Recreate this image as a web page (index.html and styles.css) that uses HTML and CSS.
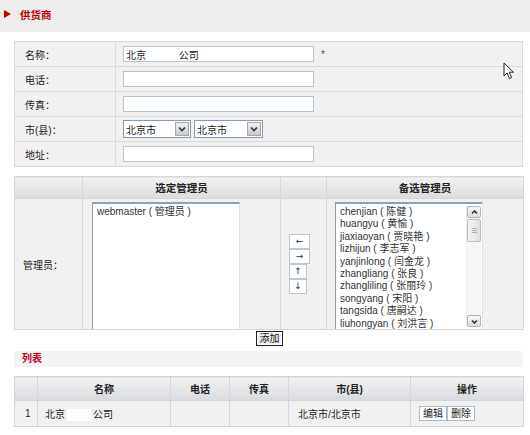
FILE: index.html
```html
<!DOCTYPE html>
<html>
<head>
<meta charset="utf-8">
<link rel="stylesheet" href="styles.css">
</head>
<body>
<div class="titlebar"><span class="tri"></span><span class="title">供货商</span></div>

<table class="form">
  <colgroup><col class="c-label"><col></colgroup>
  <tr><th>名称：</th><td><input class="txt" value="北京　　　 公司"><span class="req">*</span></td></tr>
  <tr><th>电话：</th><td><input class="txt" value=""></td></tr>
  <tr><th>传真：</th><td><input class="txt" value=""></td></tr>
  <tr><th>市(县)：</th><td>
    <div class="selects">
      <div class="sel"><span class="sel-text">北京市</span><span class="sel-btn"><svg width="12" height="12" viewBox="0 0 12 12"><path d="M3 4.5 L6 7.5 L9 4.5" fill="none" stroke="#333" stroke-width="1.6"/></svg></span></div>
      <div class="sel"><span class="sel-text">北京市</span><span class="sel-btn"><svg width="12" height="12" viewBox="0 0 12 12"><path d="M3 4.5 L6 7.5 L9 4.5" fill="none" stroke="#333" stroke-width="1.6"/></svg></span></div>
    </div>
  </td></tr>
  <tr><th>地址：</th><td><input class="txt" value=""></td></tr>
</table>

<table class="admin">
  <colgroup><col class="a1"><col class="a2"><col class="a3"><col class="a4"></colgroup>
  <tr class="head"><th></th><th>选定管理员</th><th></th><th>备选管理员</th></tr>
  <tr class="body">
    <td class="lbl">管理员：</td>
    <td class="top">
      <div class="listbox left">
        <div class="item">webmaster ( 管理员 )</div>
      </div>
    </td>
    <td class="mid">
      <div class="arrows">
        <span class="abtn wide">←</span>
        <span class="abtn wide">→</span>
        <span class="abtn">↑</span>
        <span class="abtn">↓</span>
      </div>
    </td>
    <td class="top">
      <div class="listbox right">
        <div class="items">
          <div class="item">chenjian ( 陈健 )</div>
          <div class="item">huangyu ( 黄愉 )</div>
          <div class="item">jiaxiaoyan ( 贾晓艳 )</div>
          <div class="item">lizhijun ( 李志军 )</div>
          <div class="item">yanjinlong ( 闫金龙 )</div>
          <div class="item">zhangliang ( 张良 )</div>
          <div class="item">zhangliling ( 张丽玲 )</div>
          <div class="item">songyang ( 宋阳 )</div>
          <div class="item">tangsida ( 唐嗣达 )</div>
          <div class="item">liuhongyan ( 刘洪言 )</div>
        </div>
        <div class="scrollbar">
          <span class="sb-btn"><svg width="11" height="11" viewBox="0 0 11 11"><path d="M3 6.5 L5.5 4 L8 6.5" fill="none" stroke="#333" stroke-width="1.6"/></svg></span>
          <span class="sb-thumb"><i></i><i></i><i></i></span>
          <span class="sb-track"></span>
          <span class="sb-btn"><svg width="11" height="11" viewBox="0 0 11 11"><path d="M3 4.5 L5.5 7 L8 4.5" fill="none" stroke="#333" stroke-width="1.6"/></svg></span>
        </div>
      </div>
    </td>
  </tr>
</table>

<div class="addrow"><button class="btn-add">添加</button></div>

<div class="listbar">列表</div>

<table class="list">
  <colgroup><col class="l1"><col class="l2"><col class="l3"><col class="l4"><col class="l5"><col class="l6"></colgroup>
  <tr class="head"><th></th><th>名称</th><th>电话</th><th>传真</th><th>市(县)</th><th>操作</th></tr>
  <tr class="row">
    <td class="num">1</td>
    <td class="name">北京<span class="redact"></span>公司</td>
    <td></td>
    <td></td>
    <td class="city">北京市/北京市</td>
    <td class="ops"><span class="opbtn">编辑</span><span class="opbtn">删除</span></td>
  </tr>
</table>

<svg class="cursor" width="13" height="18" viewBox="0 0 13 18"><path d="M1 1 L1 14 L4 11 L6.5 16.5 L8.6 15.6 L6.2 10.2 L10.4 10.2 Z" fill="#fff" stroke="#222" stroke-width="1" stroke-linejoin="round"/></svg>
</body>
</html>
```

FILE: styles.css
```css
html, body {
  margin: 0;
  padding: 0;
}
body {
  width: 530px;
  height: 435px;
  position: relative;
  overflow: hidden;
  background: #fff;
  color: #333;
  font-family: "Liberation Sans", "Noto Sans CJK SC", sans-serif;
  font-size: 10px;
}

/* title bar */
.titlebar {
  height: 28px;
  padding: 0 0 4px 4px;
  background: #eeeeee;
  display: flex;
  align-items: center;
}
.tri {
  width: 0;
  height: 0;
  border-left: 7px solid #d40000;
  border-top: 4px solid transparent;
  border-bottom: 4px solid transparent;
  margin-right: 9px;
}
.title {
  color: #c00000;
  font-weight: bold;
  font-size: 10.5px;
}

/* form table */
.form, .admin, .list {
  border-collapse: collapse;
  width: 509px;
  margin-left: 14px;
  background: #f1f1f1;
  table-layout: fixed;
}
.form {
  margin-top: 9px;
}
.c-label { width: 101px; }
.form th, .form td {
  border: 1px solid #dadada;
  height: 24px;
  padding: 0;
  font-weight: normal;
  text-align: left;
  color: #222;
}
.form th {
  padding-left: 10px;
}
.form td {
  padding-left: 7px;
}
.txt {
  width: 191px;
  height: 16px;
  box-sizing: border-box;
  border: 1px solid #b3c3d3;
  background: #fff;
  padding: 0 2px;
  margin: 0;
  font-family: inherit;
  font-size: 10px;
  color: #222;
  vertical-align: middle;
}
.req {
  margin-left: 7px;
  color: #555;
  font-size: 10px;
  vertical-align: middle;
}
.selects {
  display: flex;
  gap: 3px;
}
.sel {
  width: 68px;
  height: 18px;
  box-sizing: border-box;
  border: 1px solid #7f9db9;
  background: #fff;
  display: flex;
  align-items: center;
}
.sel + .sel { width: 69px; }
.sel-text {
  padding-left: 2px;
  color: #222;
}
.sel-btn {
  margin-left: auto;
  margin-right: 1px;
  width: 14px;
  height: 14px;
  box-sizing: border-box;
  border: 1px solid #a7a7a7;
  background: linear-gradient(#f0f0f0, #c9c9c9);
  display: flex;
  align-items: center;
  justify-content: center;
}

/* admin table */
.admin {
  margin-top: 9px;
}
.a1 { width: 68px; }
.a2 { width: 198px; }
.a3 { width: 46px; }
.a4 { width: 197px; }
.admin th, .admin td, .list th, .list td {
  border: 1px solid #d6d6d6;
  padding: 0;
}
.admin .head th {
  height: 21px;
  background: linear-gradient(#f2f2f2, #dcdcdc);
  font-weight: bold;
  font-size: 10.5px;
  color: #222;
}
.admin .body td {
  height: 130px;
}
.admin .lbl {
  vertical-align: middle;
  padding-left: 8px;
  color: #222;
}
.admin .top {
  vertical-align: bottom;
}
.admin .mid {
  vertical-align: middle;
}
.listbox {
  width: 148px;
  height: 127px;
  box-sizing: border-box;
  background: #fff;
  border-top: 2px solid #86a3ba;
  border-left: 1px solid #9a9a9a;
  border-right: 1px solid #e2e2e2;
  margin-left: 9px;
  line-height: 12.4px;
  color: #333;
}
.listbox.left {
  padding: 2px 4px;
}
.listbox.right {
  margin-left: 8px;
  display: flex;
}
.items {
  flex: 1;
  padding: 2px 0 0 4px;
  white-space: nowrap;
  overflow: hidden;
}
.scrollbar {
  width: 14px;
  margin: 2px 1px 2px 0;
  display: flex;
  flex-direction: column;
  background: #f6f6f6;
  border-left: 1px solid #eee;
}
.sb-btn {
  height: 12px;
  box-sizing: border-box;
  border: 1px solid #b5b5b5;
  border-radius: 2px;
  background: linear-gradient(#fafafa, #dcdcdc);
  display: flex;
  align-items: center;
  justify-content: center;
}
.sb-thumb {
  height: 23px;
  margin-top: 1px;
  box-sizing: border-box;
  border: 1px solid #bdbdbd;
  border-radius: 2px;
  background: linear-gradient(90deg, #f4f4f4, #dedede);
  display: flex;
  flex-direction: column;
  align-items: center;
  justify-content: center;
  gap: 1px;
}
.sb-thumb i {
  display: block;
  width: 5px;
  height: 1px;
  background: #b0b0b0;
}
.sb-track {
  flex: 1;
}
.arrows {
  display: flex;
  flex-direction: column;
  align-items: flex-start;
  margin-left: 8px;
}
.abtn {
  width: 18px;
  height: 15px;
  box-sizing: border-box;
  border: 1px solid #b9c8d6;
  background: #fdfdfd;
  font-family: "DejaVu Sans", sans-serif;
  font-size: 9px;
  line-height: 13px;
  text-align: center;
  color: #334;
}
.abtn.wide {
  width: 21px;
}

/* add button */
.addrow {
  width: 509px;
  margin-left: 14px;
  padding-left: 2px;
  box-sizing: border-box;
  text-align: center;
  height: 17px;
}
.btn-add {
  margin-top: 1px;
  width: 27px;
  height: 15px;
  padding: 0;
  border: 1px solid #222;
  box-shadow: inset 0 0 0 1px #fff;
  background: #efefef;
  font-family: inherit;
  font-size: 10px;
  line-height: 12px;
  color: #111;
}

/* list section */
.listbar {
  width: 509px;
  margin: 4px 0 0 14px;
  height: 16px;
  line-height: 16px;
  box-sizing: border-box;
  padding-left: 8px;
  background: #f3f3f3;
  color: #c8001e;
  font-weight: bold;
}
.list {
  margin-top: 9px;
}
.l1 { width: 23px; }
.l2 { width: 133px; }
.l3 { width: 59px; }
.l4 { width: 59px; }
.l5 { width: 122px; }
.l6 { width: 113px; }
.list .head th {
  height: 23px;
  background: linear-gradient(#f3f3f4, #d9dade);
  font-weight: bold;
  color: #222;
}
.list .row td {
  height: 25px;
  color: #222;
}
.list .num { padding-left: 10px; }
.list .name { padding-left: 7px; }
.redact {
  display: inline-block;
  width: 24px;
  height: 12px;
  background: #fff;
  margin: 0 2px;
  vertical-align: middle;
}
.list .city { padding-left: 9px; }
.list .ops { padding-left: 8px; }
.opbtn {
  display: inline-block;
  width: 28px;
  height: 15px;
  box-sizing: border-box;
  border: 1px solid #a9bccd;
  background: #fff;
  text-align: center;
  line-height: 13px;
  color: #222;
  vertical-align: middle;
}

.cursor {
  position: absolute;
  left: 503px;
  top: 62px;
}
```
